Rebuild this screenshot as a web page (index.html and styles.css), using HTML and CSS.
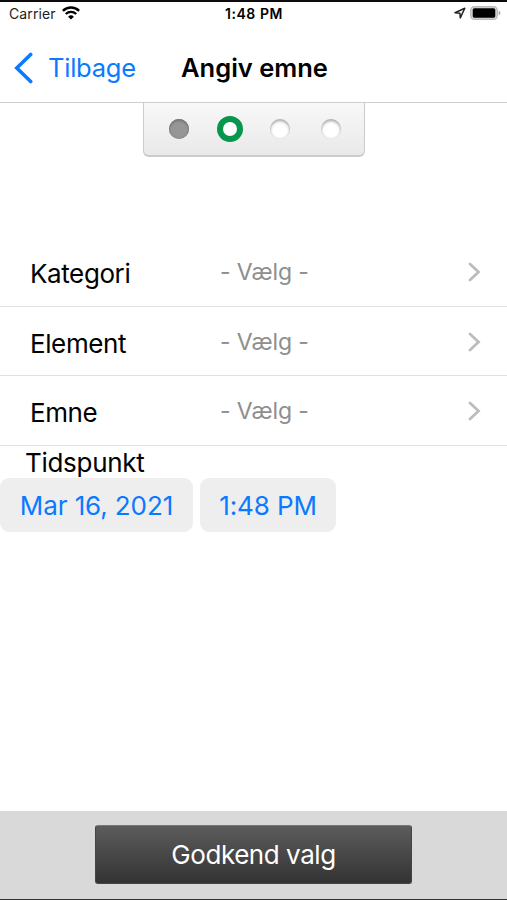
FILE: index.html
```
<!DOCTYPE html>
<html lang="da">
<head>
  <meta charset="utf-8">
  <meta name="viewport" content="width=device-width, initial-scale=1">
  <title>Angiv emne</title>
  <link rel="stylesheet" href="styles.css">
</head>
<body>
  <div class="statusbar">
    <div class="status-left">
      <span class="carrier">Carrier</span>
      <svg class="wifi" width="18" height="14" viewBox="0 0 18 14">
        <path d="M0.9 4.9a11.6 11.6 0 0 1 16.2 0" fill="none" stroke="#000" stroke-width="2.5"/>
        <path d="M3.8 8a7.4 7.4 0 0 1 10.4 0" fill="none" stroke="#000" stroke-width="2.3"/>
        <path d="M9 13.6L6.1 10.7a4.2 4.2 0 0 1 5.8 0z"/>
      </svg>
    </div>
    <span class="clock">1:48 PM</span>
    <div class="status-right">
      <svg width="12" height="12" viewBox="0 0 12 12">
        <path d="M1 5.8L10.8 1.2L6.3 10.9L5.9 6.2z" fill="none" stroke="#222" stroke-width="1.5" stroke-linejoin="round"/>
      </svg>
      <svg width="31" height="14" viewBox="0 0 31 14">
        <rect x="0.7" y="0.7" width="26.6" height="12.6" rx="3.8" fill="#ddd" stroke="#bbb" stroke-width="1.4"/>
        <rect x="2.7" y="2.3" width="22.6" height="9.4" rx="1.6"/>
        <path d="M28.7 4.7q1.8 0.6 1.8 2.3t-1.8 2.3z" fill="#aaa"/>
      </svg>
    </div>
  </div>

  <div class="navbar">
    <a class="back" href="#">
      <svg width="20" height="32" viewBox="0 0 20 32">
        <path d="M16.7 2.5L2.8 16L16.7 29.5" fill="none" stroke="#0a7aff" stroke-width="3.6" stroke-linecap="round"/>
      </svg>
      <span class="back-text">Tilbage</span>
    </a>
    <h1>Angiv emne</h1>
  </div>

  <div class="steps">
    <i class="dot done"></i>
    <i class="dot current"></i>
    <i class="dot"></i>
    <i class="dot"></i>
  </div>

  <div class="list">
    <div class="row">
      <span class="label">Kategori</span>
      <span class="value">- Vælg -</span>
      <svg class="arrow" width="13" height="20" viewBox="0 0 13 20"><path d="M2 2L10.5 10L2 18"/></svg>
    </div>
    <div class="row">
      <span class="label">Element</span>
      <span class="value">- Vælg -</span>
      <svg class="arrow" width="13" height="20" viewBox="0 0 13 20"><path d="M2 2L10.5 10L2 18"/></svg>
    </div>
    <div class="row">
      <span class="label">Emne</span>
      <span class="value">- Vælg -</span>
      <svg class="arrow" width="13" height="20" viewBox="0 0 13 20"><path d="M2 2L10.5 10L2 18"/></svg>
    </div>
  </div>

  <div class="time-title">Tidspunkt</div>
  <div class="pickers">
    <div class="picker date">Mar 16, 2021</div>
    <div class="picker time">1:48 PM</div>
  </div>

  <div class="footer">
    <button class="submit">Godkend valg</button>
  </div>
</body>
</html>
```
FILE: styles.css
```
* {
  box-sizing: border-box;
}
body {
  margin: 0;
  height: 900px;
  display: flex;
  flex-direction: column;
  overflow: hidden;
  background: #fff;
  color: #000;
  font-family: Inter, "Liberation Sans", sans-serif;
  border-top: 2px solid #0c0a0b;
}
svg {
  display: block;
  flex: none;
}
.statusbar {
  height: 23px;
  padding: 0 6px 0 9px;
  display: grid;
  grid-template-columns: 1fr auto 1fr;
  align-items: center;
  font-size: 14px;
}
.status-left, .status-right {
  display: flex;
  align-items: center;
}
.status-left {
  gap: 6px;
  color: #222;
}
.wifi {
  margin-bottom: 2px;
}
.carrier {
  letter-spacing: 0.1px;
}
.status-right {
  justify-content: flex-end;
  gap: 4px;
  padding-bottom: 1px;
}
.clock {
  font-weight: 600;
  font-size: 14px;
  letter-spacing: 0.55px;
  margin-right: 2px;
}
.navbar {
  height: 78px;
  padding: 8px 14px 0;
  display: grid;
  grid-template-columns: 1fr auto 1fr;
  align-items: center;
  border-bottom: 1px solid #cfcfcf;
}
.back {
  display: flex;
  align-items: center;
  gap: 14px;
  color: #0a7aff;
  text-decoration: none;
  font-size: 25.5px;
  letter-spacing: -0.25px;
}
h1 {
  margin: 0 0 0 2px;
  font-size: 25.5px;
  font-weight: 600;
}
.steps {
  width: 222px;
  height: 54px;
  margin: 0 0 0 143px;
  padding: 0 19px 0 21px;
  display: flex;
  align-items: center;
  justify-content: space-between;
  border: solid #cbcbcb;
  border-width: 0 1px 2px;
  border-radius: 0 0 6px 6px;
  background: linear-gradient(#f8f8f8, #e9e9e9);
}
.dot {
  width: 20px;
  height: 20px;
  margin: 0 4px;
  border-radius: 50%;
  background: #fff;
  box-shadow: inset 0 2px 3px #aaa, inset 0 0 2px #ccc;
}
.dot.done {
  background: #969696;
  box-shadow: inset 0 2px 2px #777, inset 0 0 2px #777;
}
.dot.current {
  width: 26px;
  height: 26px;
  margin: 0 1px;
  border: 6.5px solid #07964d;
  box-shadow: none;
}
.list {
  margin-top: 80px;
}
.row {
  height: 69.5px;
  padding: 2px 26px 0 30px;
  display: flex;
  align-items: center;
  border-bottom: 1px solid #e0e0e0;
}
.label {
  width: 190px;
  padding-top: 3px;
  font-size: 26px;
  letter-spacing: -0.4px;
}
.value {
  flex: 1;
  font-size: 23px;
  letter-spacing: -0.1px;
  color: #8e8e8e;
}
.arrow path {
  fill: none;
  stroke: #bcbcbc;
  stroke-width: 2.8;
  stroke-linecap: round;
}
.time-title {
  height: 32px;
  padding-left: 25px;
  line-height: 33px;
  font-size: 26px;
  letter-spacing: -0.3px;
}
.pickers {
  display: flex;
  gap: 7px;
}
.picker {
  height: 54px;
  line-height: 55px;
  border-radius: 9px;
  background: #eee;
  color: #0a7aff;
  font-size: 26px;
  letter-spacing: -0.1px;
  text-align: center;
  white-space: nowrap;
}
.date {
  width: 193px;
}
.time {
  width: 136px;
}
.footer {
  height: 89px;
  margin-top: auto;
  display: flex;
  justify-content: center;
  padding-top: 14px;
  background: #d9d9d9;
  border-bottom: 1px solid #333;
}
.submit {
  width: 317px;
  height: 59px;
  padding: 0;
  border: 1px solid #444;
  border-top-color: #777;
  border-radius: 3px;
  background: linear-gradient(#5c5c5c, #333);
  color: #fff;
  font: 26px Inter, "Liberation Sans", sans-serif;
  letter-spacing: -0.45px;
}
```
